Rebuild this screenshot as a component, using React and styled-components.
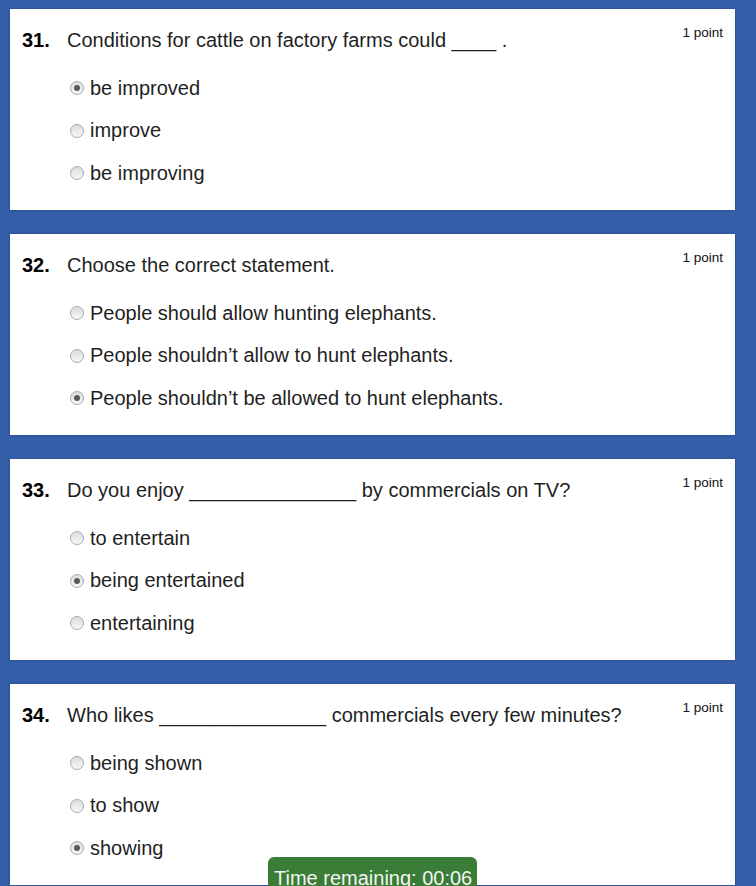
import React from 'react';
import styled, { createGlobalStyle } from 'styled-components';

const GlobalStyle = createGlobalStyle`
  html, body {
    margin: 0;
    padding: 0;
    background: #355ea9;
    overflow: hidden;
  }
  body {
    font-family: Arial, "Liberation Sans", sans-serif;
  }
`;

const Page = styled.div`
  display: flex;
  flex-direction: column;
  gap: 24px;
  padding: 9px 0 40px 10px;
  width: 725px;
`;

const Card = styled.div`
  background: #fff;
  height: 201px;
  box-sizing: border-box;
  padding: 20px 12px 0 12px;
  box-shadow: 0 0 2px rgba(0, 0, 0, 0.35);
`;

const QuestionRow = styled.div`
  display: flex;
  align-items: flex-start;
  height: 22px;
`;

const Number = styled.div`
  width: 45px;
  font-size: 20px;
  line-height: 22px;
  font-weight: bold;
  color: #000;
`;

const Question = styled.div`
  flex: 1;
  font-size: 20px;
  line-height: 22px;
  color: #1f1f1f;
  white-space: nowrap;
`;

const Points = styled.div`
  font-size: 13.5px;
  line-height: 14px;
  margin-top: -3px;
  color: #111;
`;

const Options = styled.div`
  display: flex;
  flex-direction: column;
  margin-top: 16px;
  padding-left: 48px;
`;

const Option = styled.label`
  display: flex;
  align-items: center;
  height: 42.5px;
  font-size: 20px;
  color: #1f1f1f;
`;

const Radio = styled.span`
  width: 14px;
  height: 14px;
  box-sizing: border-box;
  border-radius: 50%;
  border: 1px solid #a9a9a9;
  background: linear-gradient(#dcdcdc, #f7f7f7);
  margin-right: 6px;
  display: flex;
  align-items: center;
  justify-content: center;
  &::after {
    content: '';
    width: 6px;
    height: 6px;
    border-radius: 50%;
    background: #5a5a5a;
    display: ${props => props.checked ? 'block' : 'none'};
  }
`;

const Timer = styled.div`
  position: fixed;
  left: 268px;
  top: 857px;
  width: 209px;
  height: 40px;
  box-sizing: border-box;
  padding: 10px 0 0 6px;
  background: #3a7d36;
  border-radius: 6px;
  color: #f4f4f4;
  font-size: 20px;
  line-height: 23px;
  white-space: nowrap;
`;

const questions = [
  {
    num: '31.',
    text: 'Conditions for cattle on factory farms could ____ .',
    options: ['be improved', 'improve', 'be improving'],
    picked: 0,
  },
  {
    num: '32.',
    text: 'Choose the correct statement.',
    options: [
      'People should allow hunting elephants.',
      'People shouldn\u2019t allow to hunt elephants.',
      'People shouldn\u2019t be allowed to hunt elephants.',
    ],
    picked: 2,
  },
  {
    num: '33.',
    text: 'Do you enjoy _______________ by commercials on TV?',
    options: ['to entertain', 'being entertained', 'entertaining'],
    picked: 1,
  },
  {
    num: '34.',
    text: 'Who likes _______________ commercials every few minutes?',
    options: ['being shown', 'to show', 'showing'],
    picked: 2,
  },
];

export default function App() {
  return (
    <>
      <GlobalStyle />
      <Page>
        {questions.map((q) => (
          <Card key={q.num}>
            <QuestionRow>
              <Number>{q.num}</Number>
              <Question>{q.text}</Question>
              <Points>1 point</Points>
            </QuestionRow>
            <Options>
              {q.options.map((o, i) => (
                <Option key={o}>
                  <Radio checked={i === q.picked} />
                  {o}
                </Option>
              ))}
            </Options>
          </Card>
        ))}
      </Page>
      <Timer>Time remaining: 00:06</Timer>
    </>
  );
}
